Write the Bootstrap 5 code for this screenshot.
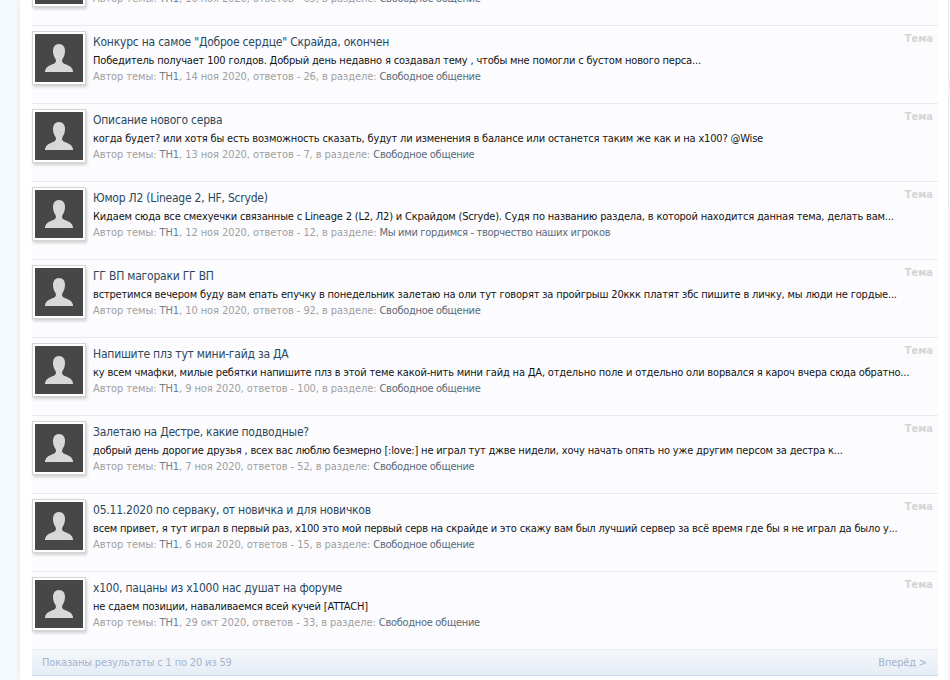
<!DOCTYPE html>
<html lang="ru">
<head>
    <meta charset="UTF-8">
    <title>Результаты поиска</title>
    <link href="https://cdn.jsdelivr.net/npm/bootstrap@5.3.0/dist/css/bootstrap.min.css" rel="stylesheet">
    <style>
        html, body { height: 100%; overflow: hidden; }
        body {
            background-color: #f5faff;
            font-family: "DejaVu Sans Condensed", "DejaVu Sans", sans-serif;
            font-size: 11px;
            color: #141414;
        }
        .page-panel {
            background: #fff;
            margin-left: 20px;
            width: 928px;
            flex: none;
            min-height: 100%;
            padding: 0 10px 0 12px;
            box-shadow: 0 0 8px rgba(0, 0, 0, .08);
        }
        .result-list { margin-top: -53px; background: #fcfcff; }
        .result-row { height: 78px; border-top: 1px solid #e8e8ef; padding: 5px 0 0; }
        .avatar-box {
            width: 54px; height: 54px; flex: none;
            background: #fff; border: 1px solid #d4d4d4; padding: 2px;
            box-shadow: 1px 2px 3px rgba(0, 0, 0, .18);
        }
        .avatar-box svg { display: block; width: 48px; height: 48px; }
        .row-body { margin-left: 7px; min-width: 0; }
        .row-title { font-size: 12px; line-height: 18px; color: #2b485c; margin-top: 2px; letter-spacing: -.22px; }
        .row-snippet { font-size: 11px; line-height: 16px; margin-top: 2px; white-space: nowrap; letter-spacing: -.18px; }
        .row-meta { font-size: 11px; line-height: 16px; color: #a0a0a0; white-space: nowrap; letter-spacing: -.08px; }
        .row-meta b { font-weight: 400; color: #6d7f8c; }
        .row-meta i { font-style: normal; color: #5a6b78; letter-spacing: -.3px; }
        .row-kind { font-size: 11px; font-weight: 700; color: #d4d4d4; margin: 1px 5px 0 auto; line-height: 14px; }
        .result-foot {
            height: 27px; padding: 2px 11px 0 10px;
            border-top: 1px solid #e8e8ef; border-bottom: 1px solid #c5d8ee;
            background: linear-gradient(#f5f7fb, #e6edf6);
            color: #a5b4cd; font-size: 11px; letter-spacing: -.16px;
        }
        .side-column { width: 20px; flex: none; margin-top: -40px; }
        .side-box { background: #fff; border: 1px solid #d9e5f3; border-radius: 4px; }
        .side-box-a { height: 122px; margin-bottom: 13px; }
        .side-box-b { height: 114px; }
    </style>
</head>
<body class="d-flex">

<svg width="0" height="0" class="position-absolute">
    <symbol id="noavatar" viewBox="0 0 48 48">
        <rect width="48" height="48" fill="#474747"/>
        <path d="M24 10c-4 0-6 3-6 7 0 3 1 6 2.500 8 .7 1 .7 3-.5 4-3 2-9 2.500-10 8v1h28v-1c-1-5.500-7-6-10-8-1.200-1-1.200-3-.5-4 1.500-2 2.500-5 2.500-8 0-4-2-7-6-7z" fill="#d8d8d8"/>
    </symbol>
</svg>

<div class="page-panel">
    <div class="result-list" id="results"></div>
    <div class="result-foot d-flex align-items-center justify-content-between">
        <span>Показаны результаты с 1 по 20 из 59</span>
        <span>Вперёд &gt;</span>
    </div>
</div>
<div class="side-column">
    <div class="side-box side-box-a"></div>
    <div class="side-box side-box-b"></div>
</div>

<script>
    const rows = [
        ['', '', '16 ноя 2020', 65, 'Свободное общение'],
        ['Конкурс на самое "Доброе сердце" Скрайда, окончен', 'Победитель получает 100 голдов. Добрый день недавно я создавал тему , чтобы мне помогли с бустом нового перса...', '14 ноя 2020', 26, 'Свободное общение'],
        ['Описание нового серва', 'когда будет? или хотя бы есть возможность сказать, будут ли изменения в балансе или останется таким же как и на х100? @Wise', '13 ноя 2020', 7, 'Свободное общение'],
        ['Юмор Л2 (Lineage 2, HF, Scryde)', 'Кидаем сюда все смехуечки связанные с Lineage 2 (L2, Л2) и Скрайдом (Scryde). Судя по названию раздела, в которой находится данная тема, делать вам...', '12 ноя 2020', 12, 'Мы ими гордимся - творчество наших игроков'],
        ['ГГ ВП магораки ГГ ВП', 'встретимся вечером буду вам епать епучку в понедельник залетаю на оли тут говорят за пройгрыш 20ккк платят збс пишите в личку, мы люди не гордые...', '10 ноя 2020', 92, 'Свободное общение'],
        ['Напишите плз тут мини-гайд за ДА', 'ку всем чмафки, милые ребятки напишите плз в этой теме какой-нить мини гайд на ДА, отдельно поле и отдельно оли ворвался я кароч вчера сюда обратно...', '9 ноя 2020', 100, 'Свободное общение'],
        ['Залетаю на Дестре, какие подводные?', 'добрый день дорогие друзья , всех вас люблю безмерно [:love:] не играл тут джве нидели, хочу начать опять но уже другим персом за дестра к...', '7 ноя 2020', 52, 'Свободное общение'],
        ['05.11.2020 по серваку, от новичка и для новичков', 'всем привет, я тут играл в первый раз, х100 это мой первый серв на скрайде и это скажу вам был лучший сервер за всё время где бы я не играл да было у...', '6 ноя 2020', 15, 'Свободное общение'],
        ['х100, пацаны из х1000 нас душат на форуме', 'не сдаем позиции, наваливаемся всей кучей [ATTACH]', '29 окт 2020', 33, 'Свободное общение']
    ];
    document.getElementById('results').innerHTML = rows.map(r => `
        <div class="result-row d-flex align-items-start">
            <div class="avatar-box"><svg><use href="#noavatar"/></svg></div>
            <div class="row-body">
                <div class="row-title">${r[0] || '&nbsp;'}</div>
                <div class="row-snippet">${r[1] || '&nbsp;'}</div>
                <div class="row-meta">Автор темы: <b>TH1</b>, ${r[2]}, ответов - ${r[3]}, в разделе: <i>${r[4]}</i></div>
            </div>
            <div class="row-kind">Тема</div>
        </div>`).join('');
</script>
<script src="https://cdn.jsdelivr.net/npm/bootstrap@5.3.0/dist/js/bootstrap.bundle.min.js"></script>
</body>
</html>
